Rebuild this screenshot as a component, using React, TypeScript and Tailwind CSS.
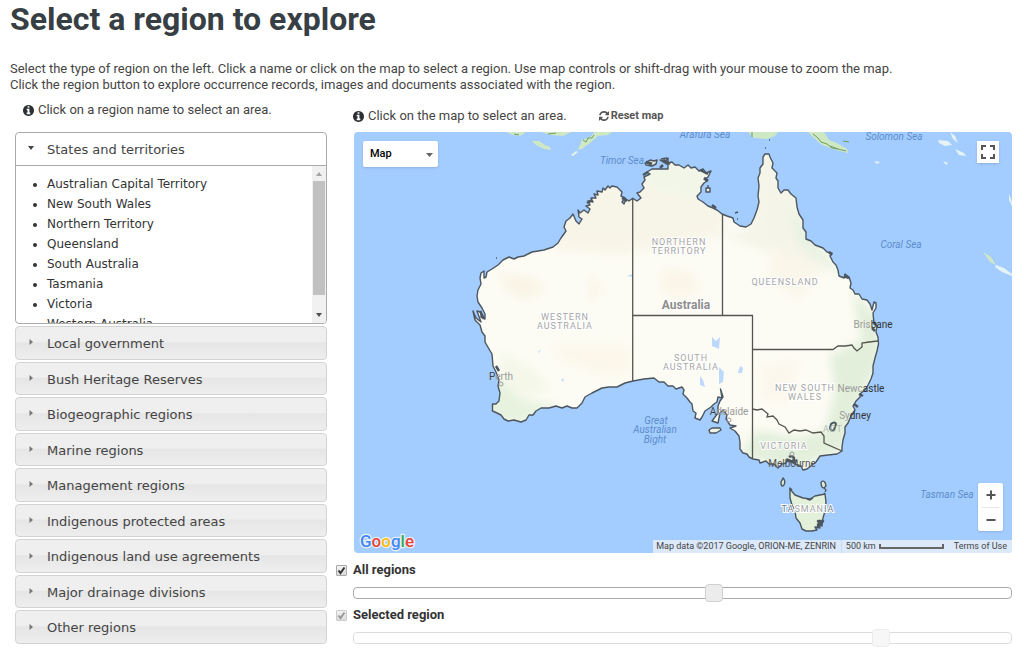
import { useRef, useState } from 'react';

const REGION_TYPES = [
  'Local government',
  'Bush Heritage Reserves',
  'Biogeographic regions',
  'Marine regions',
  'Management regions',
  'Indigenous protected areas',
  'Indigenous land use agreements',
  'Major drainage divisions',
  'Other regions',
];

const STATES = [
  'Australian Capital Territory',
  'New South Wales',
  'Northern Territory',
  'Queensland',
  'South Australia',
  'Tasmania',
  'Victoria',
  'Western Australia',
];

const MAINLAND =
  'M632.7 198.3 L629 201 626 199 624 204 622 202 625 198 621 196 622 192 617 187 612 186 610 188 608 186 605 190 603 188 602 192 597 191 598 195 594 194 596 198 591 198 593 202 588 201 590 205 586 206 590 209 588 213 584 210 580 213 578 210 579 217 582 219 579 224 576 221 573 214 570 218 566 221 564 227 566 231 561 238 558 243 553 247 544 250 532 252 524 256 518 257 514 259 509 257 503 260 498 265 492 269 487 272 486 277 484 278 484 271 481 273 480 278 481 284 478 290 477 296 478 302 482 308 485 314 485 319 481 317 481 312 477 311 481 322 476 318 473 311 475 320 480 325 482 332 485 336 485 342 489 349 492 354 493 366 496 372 499 380 498 386 500 393 499 401 496 404 492.5 404 492.5 411 497 413 501 415 504 419 508 421 514 420 521 422 526 420 529 415 533 415 536 411 541 408 549 408 556 406 562 408 567 406 572 408 577 408 582 403 585 397 592 393 602 388 609 387 617 387 625 383 633 381 644 379 654 378 659 382 664 382 668 386 673 386 676 389 682 387 684 390 683 394 687 398 690 402 692 404 693 411 696 413 695 418 700 420 702 417 705 411 711 407 714 404 717 402 718 397 722 398 720.5 389 723 397 720 401 718 406 718 413 712 421 718 423 720 413 723 410 727 415 726 419 730 425 736 426 730 428 735 431 739 436 740 442 740 449 743 453 747 454 749 457 753 459 759 460 760 463 766 461 769 464 774 464 778 468 782 464 786 463 787 459 792 461 797 460 795 464 801 466 803 470 807 469 812 465 816 462 820 456 828 455 837 454 842 451 842 447 843 440 845 433 845 427 848 423 851 416 855 410 853 406 856 401 860 397 861 393 865 390 868 385 871 379 873 373 873 366 875 358 877 351 878.5 344 878 337 876 332 877 326 874 324 873 313 876 308 876 303 874 302 872 310 870 304 867 300 862 299 859 294 855 294 853 290 850 288 851 283 849 277 845 274 844 278 839 276 838 270 836 265 833 262 830 256 832 253 827 252 823 248 815 245 811 241 806 239 806 232 803 228 803 220 799 214 797 207 796 198 791 194 788 190 784 190 781 193 778 188 778 181 776 178 777 173 772 168 773 163 770 157 769 154 765 154 763 157 763 164 760 168 760 173 758 178 759 186 758 196 759 202 757 210 754 218 751 224 746 227 740 226 734 222 733 218 727 216 722 214 717 210 713 208 708 206 703 202 698 199 697 196 701 192 701 187 704 183 707 181 705 179 708 177 711 171 706 173 703 169 699 171 695 167 691 168 688 165 684 168 679 165 675 165 672 162 668 163 668 158 665 162 660 160 668 165 668 169 660 169 652 169 647 172 650 174 644 177 645 180 642 184 644 188 640 192 637 193 641 198 637 201 632.7 198.3Z';

const TASMANIA =
  'M790 489 L795 495 803 498 810 499 815 496 825 494 826 502 825 511 823 518 822 526 818 525 820 528 815 527 817 530 812 531 806 531 802 529 800 523 796 518 795 511 792 505 790 498Z';

const BORDERS = [
  'M632.7 199V381',
  'M722.5 214V315.5',
  'M632.7 315.5H752.5V459',
  'M752.5 349.5H833L838 346 845 346 852 345 854 348 857 351 862 347 862 343 869 342 878 341',
  'M752.5 409L757 410 762 409 768 414 767 417 773 416 777 420 779 424 785 427 789 433 794 430 800 431 806 430 813 433 821 432 824 436 824 443 842 451',
];

function InfoIcon() {
  return (
    <svg viewBox="128 128 1536 1536" className="size-[11px] shrink-0 fill-[#2b2f33]" aria-hidden="true">
      <path d="M1152 1376v-160q0-14-9-23t-23-9h-96v-512q0-14-9-23t-23-9h-320q-14 0-23 9t-9 23v160q0 14 9 23t23 9h96v320h-96q-14 0-23 9t-9 23v160q0 14 9 23t23 9h448q14 0 23-9t9-23zm-128-896v-160q0-14-9-23t-23-9h-192q-14 0-23 9t-9 23v160q0 14 9 23t23 9h192q14 0 23-9t9-23zm640 416q0 209-103 385.5t-279.5 279.5-385.5 103-385.5-103-279.5-279.5-103-385.5 103-385.5 279.5-279.5 385.5-103 385.5 103 279.5 279.5 103 385.5z" />
    </svg>
  );
}

function RefreshIcon() {
  return (
    <svg viewBox="0 0 1536 1536" className="size-[10px] fill-[#555]" aria-hidden="true">
      <path d="M1511 928q0 5-1 7-64 268-268 434.5t-478 166.5q-146 0-282.5-55t-243.5-157l-129 129q-19 19-45 19t-45-19-19-45v-448q0-26 19-45t45-19h448q26 0 45 19t19 45-19 45l-137 137q71 66 161 102t187 36q134 0 250-65t186-179q11-17 53-117 8-23 30-23h192q13 0 22.5 9.5t9.5 22.5zm25-800v448q0 26-19 45t-45 19h-448q-26 0-45-19t-19-45 19-45l138-138q-148-137-349-137-134 0-250 65t-186 179q-11 17-53 117-8 23-30 23h-199q-13 0-22.5-9.5t-9.5-22.5v-7q65-268 270-434.5t480-166.5q146 0 284 55.5t245 156.5l130-129q19-19 45-19t45 19 19 45z" />
    </svg>
  );
}

function MapDrawing() {
  return (
    <svg viewBox="354 132 658 421" preserveAspectRatio="xMidYMid slice" className="block h-full w-full font-[Roboto,sans-serif]" role="img" aria-label="Map of Australia">
      <defs>
        <clipPath id="land">
          <path d={MAINLAND} />
        </clipPath>
        <filter id="soft" x="-20%" y="-20%" width="140%" height="140%">
          <feGaussianBlur stdDeviation="5" />
        </filter>
      </defs>
      <rect x="354" y="132" width="658" height="421" fill="#a3ccff" />

      {/* neighbouring islands */}
      <g fill="#cfe8c4">
        <path d="M506 132h20l-6 4-7-1zM541 132h30l-8 4-12-1z" />
        <path d="M532 141l7 0 6 4 5 2 1 3-7-1-8-4z" />
        <path d="M578 150l4-10 8-3 5-5h17l-4 3-10 1-8 7-8 6z" />
        <path d="M571 155l5-4 2 1-5 4z" fill="#e4f3e4" />
        <path d="M748 132h30l-3 4-8 3-13-1z" />
        <path d="M808 132h16l5 8 8 3 10 6 1 4-12-3-14-5-8-7z" />
        <path d="M983 252l8 5 5 8-6-3z" />
      </g>
      <g fill="#e6f3f3">
        <path d="M938 140l10 1 4 4-7 1-6-3zM950 132l5 4 3 7-5-4zM955 149l9 4 2 3-7-1zM943 161l5 2-2 2zM874 161l6 1-3 2zM996 265l8 3 8 6v2l-10-4-7-5zM1009 194l3 8v4l-3-6z" />
      </g>
      <g fill="none" stroke="#6f9d62" strokeWidth="1">
        <path d="M583 140l3 2 2-4 4 0 2-3M813 134l5 4 3 4 6 2 5 4 6 1M830 146l8 3 8 2M752 132v5M843 141l6 1" />
        <path d="M514 134l5 1M548 134l8-1" />
      </g>

      {/* land and relief tints */}
      <path d={MAINLAND} fill="#fdfcf4" />
      <g clipPath="url(#land)">
        <g filter="url(#soft)" opacity="0.75">
          <path d="M560 180L720 150 725 235 640 250 560 245Z" fill="#f5f3e4" />
          <path d="M640 160L715 155 700 200 650 190Z" fill="#edf4e4" />
          <path d="M752 150L800 150 800 210 835 260 850 270 810 270 725 235 750 230Z" fill="#f1f3e4" />
          <path d="M786 200L810 240 835 265 850 290 835 270 800 245Z" fill="#dcefdc" />
          <path d="M852 290L880 320 880 360 860 400 845 450 790 470 740 455 756 430 800 438 825 430 835 390 830 355 862 340Z" fill="#d9ebd3" />
          <path d="M485 385L505 380 520 400 560 405 520 425 485 420Z" fill="#dff0d8" />
          <path d="M500 350L535 370 550 390 520 400 498 375Z" fill="#f2f6e6" />
          <path d="M500 272L535 278 545 290 525 300 505 290Z" fill="#f8f2e2" />
          <path d="M590 275L602 285 597 300 588 300Z" fill="#f9f3e4" />
          <path d="M665 268L690 272 700 290 680 298 660 290Z" fill="#f9f3e4" />
          <path d="M550 345L630 345 630 375 600 375 560 360Z" fill="#fbf6e8" />
          <path d="M770 245L820 270 800 300 770 280Z" fill="#f9f4e6" />
          <path d="M760 365L800 360 790 400 760 400Z" fill="#fbf6ea" />
          <path d="M545 235L632 240 630 255 560 250Z" fill="#f7f3e4" />
        </g>
        <path d="M712 337l4 4 4-4-1 12-7-3zM719 367l5 5-1 10-4 2zM700 376l3 4 2 7-5-2zM740 366l3 2-1 5-4 0zM627 276l6-2v3zM561 380l3-2-1 4zM538 352l3-3-2 4z" fill="#bcd9fb" />
      </g>
      <path d={TASMANIA} fill="#e3f1da" />

      {/* coast lines and state borders */}
      <g fill="none" stroke="#4c5660" strokeWidth="1.4" strokeLinejoin="round">
        <path d={MAINLAND} />
        <path d={TASMANIA} />
        <path d="M790 490l0-2 2 2M825 494l-1-1M807 499l3 1 3-2" />
        <path d="M817 525l3-1-2-3 5 0-3 4-3 2" strokeWidth="2.5" />
        <path d="M645 163l5-3 4 1 3-1-1 4-4 2-6-1zM661 159l6-1M706 188h4v4h-4zM708 185v3M735 213l3-1M737 219h1M765 148h1M769 140h1M496 258h1" fill="#e9eee0" />
        <path d="M709 430l3-2 8 0 1 2-5 3-6 0z" fill="#eef3e4" />
        <path d="M783 478q3 3 1 7q-3 3-3-3zM821 482q4-3 5 4l-2 2q-3 0-3-6M824 488l2 2-1 2" fill="#dbead4" />
        <path d="M831 424q4-3 5 0l-2 6q-3 2-4-2z" strokeWidth="2" />
        <path d="M789 457q3-2 5 1l-1 4M787 460l8 3M872 328l3 3M874 322l2 3M854 404l4 3M859 394l4 2M496 366l3 5M480 311l4 8M587 203l5-3M622 198l5 3M643 175l5-3M660 168l3-3M700 170l8 4M712 205l4 3M829 252l3 3M844 276l5 2" strokeWidth="2.5" />
        <path d="M646 162l6 2M663 160l7 4M704 178l4 3" strokeWidth="3" />
      </g>
      <g fill="none" stroke="#55554f" strokeWidth="1.3">
        {BORDERS.map((d) => (
          <path key={d} d={d} />
        ))}
      </g>
      <g fill="none" stroke="#999" strokeWidth="1">
        <circle cx="501" cy="384" r="2" />
        <circle cx="729" cy="420" r="2" />
        <circle cx="792" cy="454" r="2" />
      </g>

      {/* state names */}
      <g fill="#a6a6a6" stroke="#fff" strokeWidth="2" paintOrder="stroke" textAnchor="middle" fontSize="9" letterSpacing="1">
        <text x="679" y="245">NORTHERN</text>
        <text x="679" y="254">TERRITORY</text>
        <text x="785" y="285">QUEENSLAND</text>
        <text x="565" y="320">WESTERN</text>
        <text x="565" y="329">AUSTRALIA</text>
        <text x="691" y="361">SOUTH</text>
        <text x="691" y="370">AUSTRALIA</text>
        <text x="805" y="391">NEW SOUTH</text>
        <text x="805" y="400">WALES</text>
        <text x="784" y="449">VICTORIA</text>
        <text x="833" y="432" stroke="none" fill="#b7bdb3">ACT</text>
        <text x="808" y="512">
          <tspan fill="#6f7c86">TA</tspan>SMAN<tspan fill="#6f7c86">IA</tspan>
        </text>
      </g>
      <text x="686" y="309" fill="#8d8d8d" stroke="#fff" strokeWidth="2" paintOrder="stroke" textAnchor="middle" fontSize="12" fontWeight="700">Australia</text>

      {/* cities */}
      <g fill="#9b9b9b" fontSize="10" textAnchor="middle">
        <text x="501" y="380"><tspan fill="#444">P</tspan>erth</text>
        <text x="873" y="328">Bris<tspan fill="#333">bane</tspan></text>
        <text x="861" y="392">Newc<tspan fill="#333">astle</tspan></text>
        <text x="855" y="419">Sy<tspan fill="#333">dney</tspan></text>
        <text x="729" y="415"><tspan fill="#444">A</tspan>delaide</text>
        <text x="792" y="467" fill="#555">Melbourne</text>
      </g>

      {/* seas */}
      <g fill="#5c8ccc" fontSize="10" fontStyle="italic" textAnchor="middle">
        <text x="622" y="164">Timor Sea</text>
        <text x="705" y="138">Arafura Sea</text>
        <text x="894" y="140">Solomon Sea</text>
        <text x="901" y="248">Coral Sea</text>
        <text x="947" y="498">Tasman Sea</text>
        <text x="656" y="424">Great</text>
        <text x="655" y="433">Australian</text>
        <text x="655" y="443">Bight</text>
      </g>
    </svg>
  );
}

function MapPanel() {
  return (
    <div className="relative h-[421px] overflow-hidden rounded-[4px] font-[Roboto,sans-serif]">
      <MapDrawing />

      <div className="absolute top-[9px] left-[9px] w-[75px] rounded-[2px] bg-white shadow-sm">
        <select aria-label="Map type" className="block h-[26px] w-full appearance-none bg-transparent pl-[7px] text-[11px] font-medium text-black outline-none">
          <option>Map</option>
          <option>Satellite</option>
        </select>
        <svg viewBox="0 0 7 4" className="pointer-events-none absolute top-[12px] right-[5px] h-[4px] w-[7px] fill-[#666]" aria-hidden="true">
          <path d="M0 0h7L3.5 4z" />
        </svg>
      </div>

      <button type="button" aria-label="Toggle fullscreen" className="absolute top-[9px] right-[13px] flex size-[22px] items-center justify-center bg-white shadow-sm">
        <svg viewBox="0 0 14 14" className="size-[14px] fill-none stroke-[#555] stroke-2" aria-hidden="true">
          <path d="M1 5V1H5M9 1H13V5M13 9V13H9M5 13H1V9" />
        </svg>
      </button>

      <div className="absolute right-[9px] bottom-[22px] flex w-[25px] flex-col items-center rounded-[2px] bg-white shadow-sm">
        <button type="button" aria-label="Zoom in" className="flex h-[24px] w-full items-center justify-center">
          <svg viewBox="0 0 10 10" className="size-[10px] stroke-[#555] stroke-2" aria-hidden="true">
            <path d="M5 0.5V9.5M0.5 5H9.5" />
          </svg>
        </button>
        <div className="h-px w-[17px] bg-[#e6e6e6]" />
        <button type="button" aria-label="Zoom out" className="flex h-[23px] w-full items-center justify-center">
          <svg viewBox="0 0 10 10" className="size-[10px] stroke-[#555] stroke-2" aria-hidden="true">
            <path d="M0.5 5H9.5" />
          </svg>
        </button>
      </div>

      <a href="#google" aria-label="Google" className="absolute bottom-0 left-[5px]">
        <svg viewBox="0 0 60 24" className="block h-[24px] w-[60px] font-[Roboto,sans-serif]">
          <text x="1" y="18" fontSize="17" fontWeight="500" stroke="#e6f1ff" strokeWidth="2.5" strokeLinejoin="round" paintOrder="stroke">
            <tspan fill="#4285f4">G</tspan>
            <tspan fill="#ea4335">o</tspan>
            <tspan fill="#fbbc05">o</tspan>
            <tspan fill="#4285f4">g</tspan>
            <tspan fill="#34a853">l</tspan>
            <tspan fill="#ea4335">e</tspan>
          </text>
        </svg>
      </a>

      <div className="absolute right-0 bottom-0 flex h-[13px] items-center bg-[#dce9fb] text-[9px] leading-[13px] text-[#444]">
        <span className="pr-[5px] pl-[3px]">Map data ©2017 Google, ORION-ME, ZENRIN</span>
        <span className="flex items-center gap-[3px] border-l border-[#c3d9f8] pl-[4px]">
          500 km
          <span className="h-[5px] w-[65px] border-2 border-t-0 border-[#666]" />
        </span>
        <a href="#terms" className="pr-[5px] pl-[10px]">Terms of Use</a>
      </div>
    </div>
  );
}

function LayerControl({ id, label, value, disabled }: { id: string; label: string; value: number; disabled?: boolean }) {
  return (
    <div className="grid grid-cols-[11px_1fr] items-center gap-x-[6px]">
      <span className="relative block size-[11px]">
        <input
          id={id}
          type="checkbox"
          defaultChecked
          disabled={disabled}
          className="peer block size-[11px] appearance-none rounded-[1px] border border-[#aaa] bg-linear-to-b from-[#f2f2f2] to-[#dcdcdc] disabled:border-[#ccc]"
        />
        <svg viewBox="0 0 11 11" className="pointer-events-none absolute inset-0 hidden size-[11px] fill-none stroke-[#333] stroke-2 peer-checked:block peer-disabled:stroke-[#999]" aria-hidden="true">
          <path d="M2.5 5.5L4.5 8L8.5 2.5" />
        </svg>
      </span>
      <label htmlFor={id} className="text-[13px] leading-[20px] font-bold text-[#333]">
        {label}
      </label>
      <input
        type="range"
        aria-label={`${label} opacity`}
        min={0}
        max={100}
        step="any"
        defaultValue={value}
        disabled={disabled}
        className="col-start-2 mt-[3px] mb-[2px] block h-[20px] w-full appearance-none bg-transparent disabled:opacity-40 [&::-webkit-slider-runnable-track]:h-[12px] [&::-webkit-slider-runnable-track]:rounded-[4px] [&::-webkit-slider-runnable-track]:border [&::-webkit-slider-runnable-track]:border-[#aaa] [&::-webkit-slider-runnable-track]:bg-white [&::-webkit-slider-thumb]:-mt-[4px] [&::-webkit-slider-thumb]:size-[18px] [&::-webkit-slider-thumb]:appearance-none [&::-webkit-slider-thumb]:rounded-[4px] [&::-webkit-slider-thumb]:border [&::-webkit-slider-thumb]:border-[#d0d0d0] [&::-webkit-slider-thumb]:bg-[#ececec]"
      />
    </div>
  );
}

function Accordion() {
  const list = useRef<HTMLUListElement>(null);
  const [active, setActive] = useState('Australian Capital Territory');
  const scroll = (top: number) => list.current?.scrollBy({ top });

  return (
    <div className="flex flex-col gap-[2px] font-[Verdana,'DejaVu_Sans',sans-serif]">
      <section className="overflow-hidden rounded-[4px] border border-[#aaa] bg-white">
        <h3>
          <button type="button" aria-expanded="true" className="flex h-[33px] w-full items-center border-b border-[#aaa] pt-[2px] pl-[11px] text-left text-[13px] text-[#444]">
            <svg viewBox="0 0 8 4" className="mr-[12px] mb-[4px] h-[4px] w-[8px] fill-[#444]" aria-hidden="true">
              <path d="M1 0h6L4 4z" />
            </svg>
            States and territories
          </button>
        </h3>
        <div className="flex h-[157px]">
          <ul ref={list} className="flex-1 list-disc overflow-y-auto pt-[8px] pl-[31px] text-[12px] leading-[20px] text-[#333] [scrollbar-width:none]">
            {STATES.map((name) => (
              <li key={name}>
                <button type="button" aria-pressed={name === active} onClick={() => setActive(name)} className="block text-left">
                  {name}
                </button>
              </li>
            ))}
          </ul>
          <div className="flex w-[14px] flex-col bg-[#f1f1f1]">
            <button type="button" aria-label="Scroll up" onClick={() => scroll(-20)} className="flex h-[15px] items-center justify-center">
              <svg viewBox="0 0 6 4" className="h-[4px] w-[6px] fill-[#a3a3a3]" aria-hidden="true">
                <path d="M0 4h6L3 0z" />
              </svg>
            </button>
            <div className="mx-px h-[114px] bg-[#c1c1c1]" />
            <button type="button" aria-label="Scroll down" onClick={() => scroll(20)} className="mt-auto flex h-[16px] items-center justify-center">
              <svg viewBox="0 0 6 4" className="h-[4px] w-[6px] fill-[#505050]" aria-hidden="true">
                <path d="M0 0h6L3 4z" />
              </svg>
            </button>
          </div>
        </div>
      </section>

      <div className="grid min-h-[318px] auto-rows-fr gap-[2px]">
        {REGION_TYPES.map((name) => (
          <h3 key={name} className="flex">
            <button
              type="button"
              aria-expanded="false"
              className="flex w-full items-center rounded-[4px] border border-[#d3d3d3] bg-linear-to-b from-[#efefef] from-45% via-[#e6e6e6] via-50% to-[#eeeeee] pt-[2px] pl-[11px] text-left text-[13px] text-[#444]"
            >
              <svg viewBox="0 0 8 8" className="mr-[12px] mb-[3px] size-[8px] fill-[#777]" aria-hidden="true">
                <path d="M2.5 1v6L6 4z" />
              </svg>
              {name}
            </button>
          </h3>
        ))}
      </div>
    </div>
  );
}

export default function App() {
  return (
    <main className="min-h-screen bg-white pr-[12px] pb-[7px] font-[Roboto,sans-serif] text-[#454545]">
      <h1 className="pl-[10px] text-[32px] leading-[38px] font-bold text-[#373f45]">Select a region to explore</h1>
      <p className="mt-[23px] pl-[10px] text-[13px] leading-[16px]">
        Select the type of region on the left. Click a name or click on the map to select a region. Use map controls or shift-drag with your mouse to zoom the map.
        <br />
        Click the region button to explore occurrence records, images and documents associated with the region.
      </p>

      <div className="mt-[7px] flex items-start gap-[9px] pl-[15px]">
        <div className="w-[312px] shrink-0">
          <p className="mb-[12px] flex h-[20px] items-center gap-[4px] pl-[8px] text-[13px] leading-[20px]">
            <InfoIcon />
            Click on a region name to select an area.
          </p>
          <Accordion />
        </div>

        <div className="min-w-0 flex-1">
          <div className="mt-[6px] mb-[6px] ml-[17px] flex h-[20px] items-center text-[13px] leading-[20px]">
            <p className="flex items-center gap-[4px]">
              <InfoIcon />
              Click on the map to select an area.
            </p>
            <button type="button" className="ml-[32px] flex items-center gap-[2px] text-[11px] font-bold text-[#555]">
              <RefreshIcon />
              Reset map
            </button>
          </div>
          <div className="ml-[18px]">
            <MapPanel />
          </div>
          <div className="mt-[7px]">
            <LayerControl id="all-regions" label="All regions" value={55} />
            <LayerControl id="selected-region" label="Selected region" value={81} disabled />
          </div>
        </div>
      </div>
    </main>
  );
}
